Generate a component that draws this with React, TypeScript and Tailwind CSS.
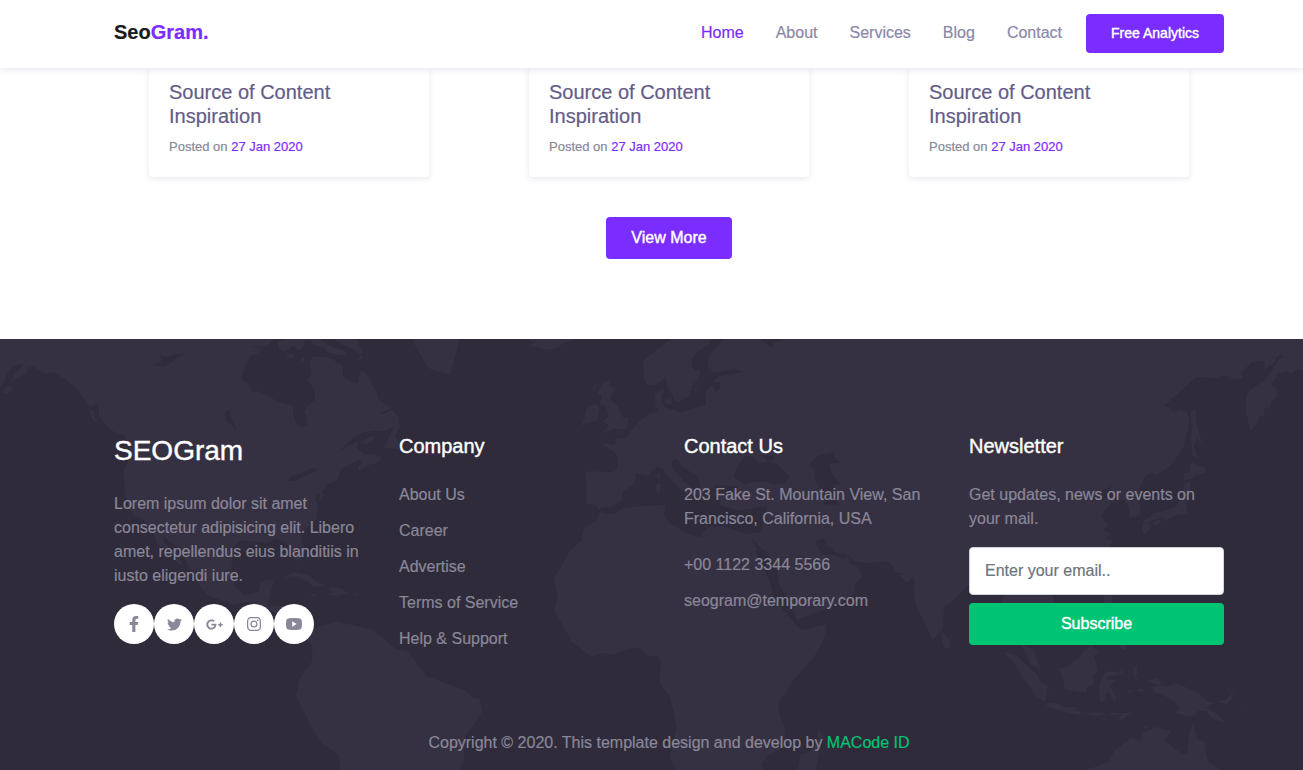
import React from "react";
import { FaFacebookF, FaTwitter, FaGooglePlusG } from "react-icons/fa";
import { BsInstagram } from "react-icons/bs";

const LAND = "#363142";
const SEA = "#2f2b3a";

type Sheet = { x: number; y: number; land: string[]; sea: string[] };

/* The world map is split in six sheets, each 440x220 drawn in thirds of a pixel. */
const sheets: Sheet[] = [
  {
    x: 0,
    y: -9,
    land: [
      "M0 0H1058L1078 48 1090 62 1084 78 1090 84 1076 94 1087 106 1084 120 1095 125 1110 150 1128 184 1135 206 1170 235 1196 262 1198 282 1199 292 1186 318 1196 334 1197 356 1152 354 1172 312 1182 290 1150 304 1124 302 1085 310 1056 326 1016 366 1048 344 1076 334 1070 352 1092 374 1118 374 1127 364 1124 378 1146 380 1132 398 1098 408 1080 422 1072 412 1086 396 1074 390 1050 402 1022 420 1012 452 982 462 966 486 972 496 954 520 950 545 952 565 925 590 902 610 906 640 918 660H872L862 642 830 626 800 640 765 634 722 632 690 660H545L510 636 486 614 494 640 512 660H498L470 640 462 614 445 590 428 568 402 557 385 530 373 480 372 420 384 395 386 350 375 318 330 299 310 275 296 255 298 230 290 222 270 232 250 205 230 175 195 147 160 127 135 131 100 110 82 114 82 126 40 152 22 166 0 180Z",
      "M6 184L20 166 38 170 34 184 14 192Z",
      "M267 238L282 242 284 262 292 274 280 272 270 254Z",
      "M1235 0V27L1255 65 1286 114 1320 125V0Z",
      "M1086 338L1104 322 1126 318 1120 330 1100 346Z",
    ],
    sea: [
      "M0 172L15 150 22 130 40 108 70 100 64 112 44 128 36 152 10 176 0 182Z",
      "M820 27L812 40 790 48 750 48 782 54 776 68 752 78 738 100 728 128 726 150 744 160 756 185 774 183 800 195 840 218 878 225 880 258 888 278 906 292 920 285 922 268 912 248 920 232 945 208 945 180 922 150 934 130 930 92 938 80 975 80 1000 90 1028 106 1030 138 1062 162 1074 156 1080 124 1094 124 1090 94 1068 88 1040 76 1014 74 980 66 970 52 940 44 930 30 914 33 910 50 896 62 880 48 852 66 838 58 832 36 850 27Z",
      "M960 27L996 52 1030 60 1048 82 1070 88 1084 76 1068 66 1040 48 1018 40 1000 27Z",
      "M456 106L486 90 478 74 500 82 520 74 556 70 530 84 512 98 492 110Z",
      "M674 250L688 238 692 262 708 292 704 306 696 286 680 274Z",
      "M864 452L876 438 906 430 930 416 950 414 944 426 914 438 886 452Z",
      "M950 488L960 494 956 520 948 512Z",
      "M1142 250L1172 236 1174 240 1146 252Z",
    ],
  },
  {
    x: 0,
    y: 211,
    land: [
      "M512 0H698L694 60 706 110 735 136 776 126 782 94 822 88 806 150 800 167 870 167 874 192 902 222 930 240 960 228 1010 215 1060 226 1120 240 1155 270 1190 298 1225 305 1250 338 1282 380 1320 393V660H1022L1018 618 965 580 935 530 888 437 900 383 936 334 937 286 922 274 906 250 860 235 830 190 796 176 770 165 742 156 700 164 622 136 600 108 590 85 560 42 545 0H530L540 30 552 50 530 36Z",
      "M848 84L882 66 926 76 950 94 974 108 940 110 918 92 888 78Z",
      "M972 130L998 128 986 112 1022 114 1045 130 1014 134 1008 143 1000 134Z",
      "M928 130L950 135 938 140Z",
      "M1060 130L1078 132 1070 138Z",
      "M872 0H914L898 36 880 20Z",
    ],
    sea: [],
  },
  {
    x: 430,
    y: -9,
    land: [
      "M0 0H97L62 130Q50 134 30 126L0 117Z",
      "M288 27L312 38 302 50 326 52 346 59 380 54 404 38 440 27Z",
      "M720 27H1320V660H420L456 630 460 600 500 570 510 545 496 524 470 522 470 460 466 430 476 424 548 426 562 418 564 388 552 364 522 348 524 340 556 345 556 322 586 326 608 298 634 268 660 250 685 246 676 224 674 192 704 174 700 148 676 166 650 164 643 146 640 92Z",
      "M520 155L545 150 538 166 555 178 540 206 562 228 578 262 597 265 588 298 552 296 512 312 538 286 518 276 536 256 528 232 508 222 516 198 502 190Z",
      "M470 235L498 220 510 232 502 270 455 288 464 262Z",
      "M488 180L500 160 502 164 492 184Z",
    ],
    sea: [
      "M844 27L836 44 804 66 786 84 784 104 794 120 812 124 806 146 788 166 774 200 750 214 734 214 726 190 714 176 706 142 698 150 702 178 694 204 704 232 734 240 750 248 800 232 828 226 826 186 846 166 858 186 870 176 870 158 850 154 866 138 938 127 918 117 850 128 832 104 838 76 880 27Z",
      "M994 27L1014 46 1032 50 1030 38 1060 32 1044 27Z",
      "M508 535L546 530 576 510 576 486 612 464 618 428 650 438 682 410 700 416 714 442 744 470 776 498 806 494 842 480 860 464 926 470 910 488 870 498 870 526 924 542 1012 528 1006 570 990 606 950 612 884 590 836 590 808 622 772 610 720 580 702 556 706 524 640 528 580 534 550 552 516 548Z",
      "M724 394L740 388 762 414 802 438 812 466 808 484 788 478 756 448 728 414Z",
      "M948 376L974 384 988 402 1012 394 1042 404 1078 440 1064 460 1028 462 1000 452 940 462 910 440 922 408 936 390Z",
      "M998 376L1036 376 1030 390 1010 392Z",
      "M1138 404L1162 378 1212 366 1216 386 1230 398 1196 402 1206 430 1230 464 1210 462 1224 502 1222 526 1184 522 1180 488 1156 452 1150 414Z",
      "M965 630L980 640 1000 660H984Z",
      "M1155 632L1182 626 1190 644 1212 660H1166Z",
    ],
  },
  {
    x: 430,
    y: 211,
    land: [
      "M420 0H975L1020 95 1030 140 1060 180 1096 222 1114 240 1193 222 1180 270 1150 325 1090 390 1045 460 1050 498 1064 530 1064 590 1012 618 994 644 1000 660H738L720 618 740 528 720 440 688 398 693 335 683 318 650 318 630 292 590 297 550 314 520 308 485 320 425 275 372 180 383 145 372 88Z",
      "M1004 0H1170L1182 14 1215 15 1240 26 1256 18 1262 40 1285 54 1297 80 1276 104 1274 130 1240 152 1200 174 1140 194 1100 210 1086 168 1050 110 1040 60Z",
      "M1206 0H1320V40L1266 32 1256 14 1222 10Z",
      "M0 384L100 418 130 443 150 447 157 485 106 562 102 630 88 660H0Z",
      "M1164 540L1180 558 1156 660H1104L1112 612 1140 604 1164 576Z",
    ],
    sea: [],
  },
  {
    x: 863,
    y: -9,
    land: ["M0 0H1320V660H0Z"],
    sea: [
      "M1320 122L1304 120 1280 132 1276 124 1248 130 1224 166 1240 176 1242 200 1226 212 1224 230 1204 238 1202 256 1188 262 1184 278 1162 302 1148 240 1148 200 1158 182 1206 150 1226 122 1250 84 1264 80 1252 76 1240 82 1236 96 1206 118 1203 92 1166 96 1134 130 1142 144 1098 150 1110 142 1074 136 1064 143 1000 141 903 228 920 234 932 248 954 238 972 248 978 264 974 300 962 350 934 394 902 424 880 436 866 426 846 440 828 476 832 530 830 556 800 564 797 530 786 510 755 512 750 498 712 508 708 490 746 466 740 474 752 498 778 510 745 518 714 556 738 588 720 598 746 612 728 624 748 634 738 660H1320Z",
    ],
  },
  {
    x: 863,
    y: 211,
    land: [
      "M0 0H738L700 60 560 110 575 160H412L425 135 318 105 265 155 243 170 240 235 208 270 155 155 153 80 130 98 108 74 130 72 100 66 78 34 0 40Z",
      "M235 240L260 274 262 290 245 298 238 280Z",
      "M725 135H748L750 160H722Z",
      "M768 284H790L788 300 774 298Z",
      "M475 285L505 295 520 320 532 360 500 340 488 312Z",
      "M422 305L460 316 490 345 524 374 530 392 552 412 550 440 545 456 520 440 480 380 450 335Z",
      "M548 460L580 458 606 472 636 470 640 482 655 485 650 495 590 482 555 472Z",
      "M543 402L556 408 550 416ZM570 414L578 416 574 422Z",
      "M657 488L670 488 664 496ZM672 490L704 487 730 492 710 498 680 496ZM736 490L806 488 790 500 766 515 770 500 780 492 744 495ZM706 502L728 508 724 514Z",
      "M588 355L606 350 620 344 650 322 664 300 685 287 712 308 694 318 705 362 690 378 692 402 674 414 668 430 640 424 604 418 602 394Z",
      "M720 372L744 362 770 368 783 353 778 370 758 376 730 380 735 390 764 388 742 406 760 444 752 456 740 432 732 424 724 455 712 455 708 410Z",
      "M812 352L824 344 822 364 826 368 818 374 822 390 812 380Z",
      "M792 424L804 416 802 430ZM816 422L834 414 852 424 830 426Z",
      "M853 392L880 384 892 392 890 406 908 412 938 398 1010 430 1030 452 1056 460 1032 472 1062 492 1088 520 1050 508 1030 484 1004 482 996 500 970 498 936 488 950 474 930 450 890 432 876 430 868 412 888 406 870 400Z",
      "M1060 454L1088 450 1104 432 1110 442 1092 462ZM1088 412L1114 430 1118 440ZM1136 450L1154 468 1146 466Z",
      "M670 660L735 636 754 602 805 562 832 575 838 546 862 540 872 530 926 542 904 572 960 614 974 606 978 552 990 520 1002 568 1022 574 1034 632 1070 660ZM840 530L858 528 852 538Z",
    ],
    sea: [],
  },
];

/* Islands that sit on top of sea shapes. */
const islands = [
  { x: 0, y: -9, d: "M856 82L872 68 884 74 874 86ZM902 86L910 80 914 92 906 96Z" },
  { x: 430, y: -9, d: "M680 434L690 430 688 450ZM676 464L692 460 690 488 680 490ZM792 176L804 172 798 184ZM700 216L712 208 722 204 728 222 714 224Z" },
  {
    x: 863,
    y: -9,
    d: "M982 250L996 235 1002 290 1018 340 1002 326 992 350 1005 384 988 376 984 320 988 292ZM984 395L1027 414 1026 430 1000 434 988 446 964 452 960 442 966 430 980 426ZM962 462L980 456 984 482 970 520 972 550 936 556 904 574 898 562 864 572 838 588 842 572 872 550 906 542 938 530 960 502ZM838 586L862 580 860 598 848 614 840 606ZM870 574L896 568 890 580 872 588Z",
  },
];

function WorldMap() {
  return (
    <svg className="absolute left-0 top-0" width="1303" height="431" viewBox="0 0 1303 431" aria-hidden="true">
      {sheets.map((s, i) => (
        <svg key={i} x={s.x} y={s.y} width="440" height="220" viewBox="0 0 1320 660">
          <path d={s.land.join("")} fill={LAND} />
          <path d={s.sea.join("")} fill={SEA} />
        </svg>
      ))}
      {islands.map((s, i) => (
        <svg key={i} x={s.x} y={s.y} width="440" height="220" viewBox="0 0 1320 660">
          <path d={s.d} fill={LAND} />
        </svg>
      ))}
    </svg>
  );
}

function YoutubeIcon() {
  return (
    <svg width="16" height="12" viewBox="0 0 16 12" fill="currentColor">
      <path
        fillRule="evenodd"
        d="M3 .2Q8-.2 13 .2Q15.6.4 15.8 3Q16.2 6 15.8 9Q15.6 11.6 13 11.8Q8 12.2 3 11.8Q.4 11.6.2 9Q-.2 6 .2 3Q.4.4 3 .2ZM6.2 3.3V8.7L10.6 6Z"
      />
    </svg>
  );
}

const nav = ["Home", "About", "Services", "Blog", "Contact"];
const company = ["About Us", "Career", "Advertise", "Terms of Service", "Help & Support"];
const social = [
  <FaFacebookF size={16} />,
  <FaTwitter size={15} />,
  <FaGooglePlusG size={17} />,
  <BsInstagram size={14} />,
  <YoutubeIcon />,
];

export default function App() {
  return (
    <div className="flex h-[770px] w-[1303px] flex-col overflow-hidden bg-white font-['Liberation_Sans',Arial,sans-serif] text-base text-[#898798] [-webkit-text-stroke:0.2px_currentColor]">
      <header className="relative z-10 flex h-[68px] shrink-0 items-start bg-white pl-[114px] shadow-[0_2px_6px_rgba(75,65,120,0.12)]">
        <div className="w-[587px] pt-[17px] text-xl leading-[30px] font-bold text-[#1b1b1f]">
          Seo<span className="text-[#7b2cff]">Gram.</span>
        </div>
        <nav className="flex gap-8 pt-[21px] leading-6">
          {nav.map((n) => (
            <a key={n} className={n === "Home" ? "text-[#7b2cff]" : "text-[#8c87a8]"}>
              {n}
            </a>
          ))}
        </nav>
        <button className="mt-3.5 ml-6 h-[39px] w-[138px] rounded bg-[#7b2cff] pb-0.5 text-sm text-white [-webkit-text-stroke:0.4px_white]">
          Free Analytics
        </button>
      </header>

      <section className="flex h-[271px] shrink-0 flex-col">
        <div className="flex gap-[100px] pl-[149px]">
          {[0, 1, 2].map((i) => (
            <article
              key={i}
              className="h-[109px] w-[280px] rounded-b bg-white px-5 pt-3 shadow-[0_2px_6px_rgba(75,65,120,0.12)]"
            >
              <h5 className="w-[200px] text-xl leading-6 text-[#645c88]">Source of Content Inspiration</h5>
              <p className="mt-[9px] text-[13px] leading-5">
                Posted on <a className="text-[#7b2cff]">27 Jan 2020</a>
              </p>
            </article>
          ))}
        </div>
        <button className="mt-10 ml-[606px] h-[42px] w-[126px] rounded bg-[#7b2cff] text-white [-webkit-text-stroke:0.4px_white]">
          View More
        </button>
      </section>

      <footer className="relative h-[431px] shrink-0 overflow-hidden bg-[#2f2b3a]">
        <WorldMap />
        <div className="relative flex gap-[30px] pt-[95px] pl-[114px] leading-6">
          <div className="w-[255px]">
            <h3 className="text-[28px] leading-[34px] text-white [-webkit-text-stroke:0.4px_white]">SEOGram</h3>
            <p className="mt-6">
              Lorem ipsum dolor sit amet consectetur adipisicing elit. Libero amet, repellendus eius blanditiis in
              iusto eligendi iure.
            </p>
            <div className="mt-4 flex">
              {social.map((icon, i) => (
                <a key={i} className="flex size-10 items-center justify-center rounded-full bg-white text-[#898798]">
                  {icon}
                </a>
              ))}
            </div>
          </div>
          <div className="w-[255px]">
            <h5 className="text-xl leading-6 text-white [-webkit-text-stroke:0.4px_white]">Company</h5>
            <ul className="mt-[25px] flex flex-col gap-3">
              {company.map((c) => (
                <li key={c}>{c}</li>
              ))}
            </ul>
          </div>
          <div className="w-[255px]">
            <h5 className="text-xl leading-6 text-white [-webkit-text-stroke:0.4px_white]">Contact Us</h5>
            <p className="mt-[25px]">203 Fake St. Mountain View, San Francisco, California, USA</p>
            <p className="mt-[22px]">+00 1122 3344 5566</p>
            <p className="mt-3">seogram@temporary.com</p>
          </div>
          <div className="w-[255px]">
            <h5 className="text-xl leading-6 text-white [-webkit-text-stroke:0.4px_white]">Newsletter</h5>
            <p className="mt-[25px]">Get updates, news or events on your mail.</p>
            <input
              className="mt-4 block h-12 w-full rounded border border-[#ced4da] bg-white px-[15px] text-base placeholder:text-[#6c757d]"
              placeholder="Enter your email.."
            />
            <button className="mt-2 h-[42px] w-full rounded bg-[#00c374] text-white [-webkit-text-stroke:0.4px_white]">
              Subscribe
            </button>
          </div>
        </div>
        <p className="relative mt-20 w-[1338px] text-center leading-6">
          Copyright © 2020. This template design and develop by <a className="text-[#00c374]">MACode ID</a>
        </p>
      </footer>
    </div>
  );
}
